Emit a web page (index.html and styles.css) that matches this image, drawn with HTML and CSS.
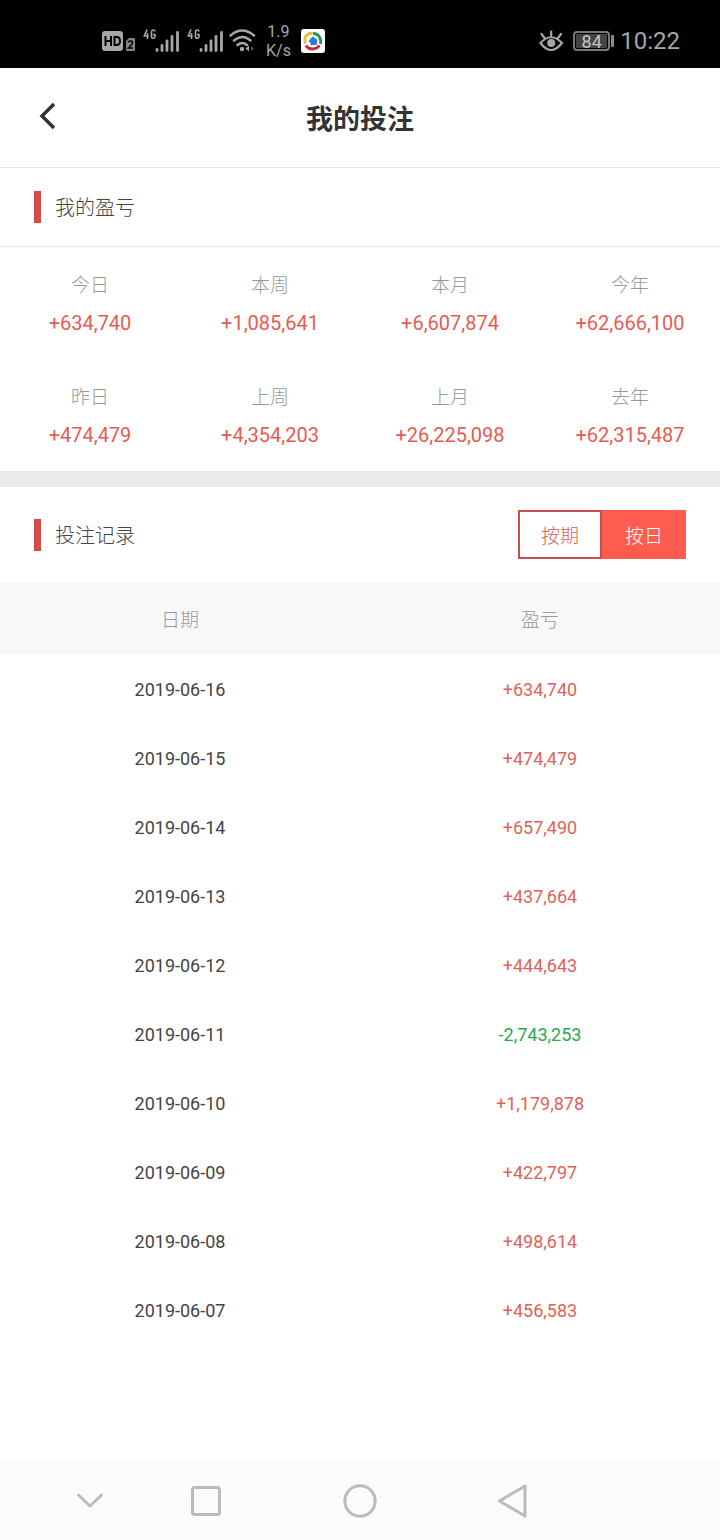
FILE: index.html
```
<!DOCTYPE html>
<html lang="zh-CN">
<head>
<meta charset="utf-8">
<meta name="viewport" content="width=device-width, initial-scale=1">
<title>我的投注</title>
<link rel="stylesheet" href="styles.css">
</head>
<body>
<div class="screen">
  <div class="status">
    <div class="status-group">
      <svg class="icon" width="34" height="22" viewBox="0 0 34 22" aria-hidden="true">
        <rect x="0" y="1" width="21" height="20" rx="3" fill="#a6a6a6"/>
        <path d="M3.500 6v10M9 6v10M3.500 11H9M12.500 7v8h2q3.500 0 3.500-4t-3.500-4z" fill="none" stroke="#000" stroke-width="2"/>
        <path d="M27 8h5q1 0 1 1v11q0 1-1 1h-7q-1 0-1-1v-9z" fill="#858585"/>
        <path d="M26.500 12.500q0-1.500 2-1.500t2 1.500q0 1.500-4 5.500h4.500" fill="none" stroke="#000" stroke-width="1.600"/>
      </svg>
      <svg class="icon" width="37" height="26" viewBox="0 0 37 26" aria-hidden="true">
        <g id="signal-shape" fill="none" stroke="#a6a6a6">
          <path d="M4 1.500L1.300 8h4.400M4.500 5v6M12 3.500Q12 2 10.300 2T8.500 4v4.500q0 1.800 1.700 1.800T12 8.500V6.500H10" stroke-width="1.600"/>
          <path d="M14 21.500v1M19 17.500v5M24 13v9.500M29 8.500v14M34.500 4.500v18" stroke-width="2.800" stroke-linecap="round"/>
        </g>
      </svg>
      <svg class="icon" width="37" height="26" viewBox="0 0 37 26" aria-hidden="true"><use href="#signal-shape"/></svg>
      <svg class="icon wifi" width="28" height="24" viewBox="0 0 28 24" aria-hidden="true">
        <g fill="none" stroke="#a6a6a6" stroke-width="2.500" stroke-linecap="round">
          <path d="M1.500 6.500Q13 -3.500 25 6.500M5 11.500q8.500-7 16.500 0M8.500 16q5-4 9.500 0"/>
        </g>
        <circle cx="13" cy="20" r="2.200" fill="#a6a6a6"/>
        <path d="M20 16.500v6l-3.500-3z" fill="#a6a6a6"/>
        <path d="M22 17v5l3-2.500z" fill="#555"/>
      </svg>
      <div class="speed"><span>1.9</span><span>K/s</span></div>
      <svg class="icon" width="24" height="24" viewBox="0 0 24 24" aria-hidden="true">
        <rect width="24" height="24" rx="3" fill="#fff"/>
        <path d="M4.500 14.500Q2.500 8.500 6.500 5.500q2.500-1.500 5-1" fill="none" stroke="#e8c33c" stroke-width="3"/>
        <path d="M12 4.500q4.500 0 6.500 3.500t1 7" fill="none" stroke="#28935b" stroke-width="3"/>
        <path d="M18.500 16.500q-2.500 3.500-7 3.500t-6.500-3.500" fill="none" stroke="#cf2737" stroke-width="3"/>
        <path d="M12 7.500l4.500 3.500-1 5h-6v-2.500l-2-.500 1.500-3z" fill="#287fc4"/>
      </svg>
    </div>
    <div class="status-group status-right">
      <svg class="icon eye" width="25" height="22" viewBox="0 0 25 22" aria-hidden="true">
        <g fill="none" stroke="#a6a6a6" stroke-width="2.200" stroke-linecap="round">
          <path d="M1.500 13Q12 1.500 23 13 12 27 1.500 13zM12.200 6V1.500M5.500 8L2.500 4M19 8l3-4"/>
        </g>
        <circle cx="12.200" cy="13" r="4" fill="#a6a6a6"/>
      </svg>
      <div class="battery">84</div>
      <span class="battery-tip"></span>
      <time class="clock">10:22</time>
    </div>
  </div>

  <header class="title-bar">
    <button class="back" type="button" aria-label="返回">
      <svg class="icon" width="20" height="28" viewBox="0 0 20 28" aria-hidden="true"><path d="M16 2L4 14l12 12" fill="none" stroke="#333" stroke-width="3.500"/></svg>
    </button>
    <h1 class="title">我的投注</h1>
  </header>

  <main class="content">
    <section>
      <div class="section-head ruled"><h2 class="section-title">我的盈亏</h2></div>
      <dl class="stats">
        <div class="stat"><dt>今日</dt><dd>+634,740</dd></div>
        <div class="stat"><dt>本周</dt><dd>+1,085,641</dd></div>
        <div class="stat"><dt>本月</dt><dd>+6,607,874</dd></div>
        <div class="stat"><dt>今年</dt><dd>+62,666,100</dd></div>
        <div class="stat"><dt>昨日</dt><dd>+474,479</dd></div>
        <div class="stat"><dt>上周</dt><dd>+4,354,203</dd></div>
        <div class="stat"><dt>上月</dt><dd>+26,225,098</dd></div>
        <div class="stat"><dt>去年</dt><dd>+62,315,487</dd></div>
      </dl>
    </section>
    <section class="records">
      <div class="section-head tall">
        <h2 class="section-title">投注记录</h2>
        <div class="switch">
          <button class="option" type="button" aria-pressed="false">按期</button>
          <button class="option active" type="button" aria-pressed="true">按日</button>
        </div>
      </div>
      <table class="table">
        <thead><tr><th scope="col">日期</th><th scope="col">盈亏</th></tr></thead>
        <tbody>
          <tr><td>2019-06-16</td><td class="gain">+634,740</td></tr>
          <tr><td>2019-06-15</td><td class="gain">+474,479</td></tr>
          <tr><td>2019-06-14</td><td class="gain">+657,490</td></tr>
          <tr><td>2019-06-13</td><td class="gain">+437,664</td></tr>
          <tr><td>2019-06-12</td><td class="gain">+444,643</td></tr>
          <tr><td>2019-06-11</td><td class="loss">-2,743,253</td></tr>
          <tr><td>2019-06-10</td><td class="gain">+1,179,878</td></tr>
          <tr><td>2019-06-09</td><td class="gain">+422,797</td></tr>
          <tr><td>2019-06-08</td><td class="gain">+498,614</td></tr>
          <tr><td>2019-06-07</td><td class="gain">+456,583</td></tr>
        </tbody>
      </table>
    </section>
  </main>

  <nav class="nav" aria-label="系统导航">
    <button class="nav-button" type="button" aria-label="收起"><svg class="icon" width="36" height="36" viewBox="0 0 36 36"><path d="M6.500 12L18 23l11.500-11"/></svg></button>
    <button class="nav-button" type="button" aria-label="最近任务"><svg class="icon" width="36" height="36" viewBox="0 0 36 36"><rect x="4.500" y="4.500" width="27" height="27" rx="2"/></svg></button>
    <button class="nav-button" type="button" aria-label="主页"><svg class="icon" width="36" height="36" viewBox="0 0 36 36"><circle cx="18" cy="18" r="15.200"/></svg></button>
    <button class="nav-button" type="button" aria-label="后退"><svg class="icon" width="36" height="36" viewBox="0 0 36 36"><path d="M30 3v30L4.500 18z"/></svg></button>
  </nav>
</div>
</body>
</html>
```
FILE: styles.css
```
* { box-sizing: border-box; }

body {
  margin: 0;
  background: #fff;
  color: #444;
  font-family: Roboto, "Noto Sans CJK SC", sans-serif;
}

button {
  margin: 0;
  padding: 0;
  border: 0;
  background: none;
  font: inherit;
}

.icon { display: block; flex: none; }

.screen {
  display: flex;
  flex-direction: column;
  min-height: 100vh;
}

.status {
  display: flex;
  justify-content: space-between;
  height: 68px;
  padding: 14px 40px 0 102px;
  background: #000;
  color: #a6a6a6;
}

.status-group {
  display: flex;
  align-items: center;
  gap: 7px;
}

.wifi { margin-left: -2px; margin-right: 2px; }

.status-right { gap: 6px; }

.eye { margin-right: 3px; }

.speed {
  display: flex;
  flex-direction: column;
  align-items: center;
  margin-right: 3px;
  font-size: 16px;
  line-height: 19px;
}

.battery {
  width: 37px;
  height: 20px;
  border: 2px solid #777;
  border-radius: 4px;
  background: #444;
  box-shadow: inset 0 0 0 1px #000;
  color: #c4c4c4;
  font-size: 18px;
  line-height: 17px;
  text-align: center;
}

.battery-tip {
  width: 3px;
  height: 12px;
  margin-left: -5px;
  border-radius: 1px;
  background: #8a8a8a;
}

.clock { font-size: 24px; }

.title-bar {
  display: grid;
  grid-template-columns: 96px 1fr 96px;
  align-items: center;
  height: 100px;
  border-bottom: 1px solid #e8e8e8;
}

.back {
  display: flex;
  justify-content: center;
  padding-bottom: 4px;
}

.title {
  margin: 0;
  color: #333;
  font-size: 27px;
  font-weight: 700;
  text-align: center;
}

.content { flex: 1; }

.section-head {
  display: flex;
  align-items: center;
  justify-content: space-between;
  height: 79px;
  padding: 0 34px;
}

.ruled { border-bottom: 1px solid #e8e8e8; }
.tall { height: 95px; }

.section-title {
  margin: 0;
  padding: 2px 0 0 14px;
  border-left: 7px solid #d54c4a;
  font-size: 20px;
  font-weight: 300;
  line-height: 30px;
}

.stats {
  display: grid;
  grid-template-columns: repeat(4, 1fr);
  margin: 0;
}

.stat {
  height: 112px;
  padding-top: 24px;
  text-align: center;
}

.stat dt {
  color: #999;
  font-size: 19px;
  font-weight: 300;
  line-height: 30px;
}

.stat dd {
  margin: 6px 0 0;
  color: #e75b52;
  font-size: 20px;
  line-height: 32px;
}

.records { border-top: 16px solid #eaeaea; }

.switch { display: flex; }

.option {
  width: 84px;
  height: 49px;
  border: 2px solid #c9504e;
  color: #d9605a;
  font-size: 19px;
  font-weight: 300;
}

.active {
  border-color: #ff5c50;
  background: #ff5c50;
  color: #fff;
}

.table {
  width: 100%;
  border-collapse: collapse;
  table-layout: fixed;
  font-size: 18px;
  text-align: center;
}

.table th {
  height: 73px;
  padding: 0;
  background: #f8f8f8;
  color: #999;
  font-size: 19px;
  font-weight: 300;
}

.table td {
  height: 69px;
  padding: 0;
}

.table .gain { color: #e06259; }
.table .loss { color: #25ab50; }

.nav {
  display: grid;
  grid-template-columns: 116fr 116fr 192fr 112fr;
  height: 78px;
  padding: 0 21% 0 32px;
  background: #fbfbfb;
}

.nav-button {
  display: flex;
  align-items: center;
  justify-content: center;
}

.nav-button svg {
  fill: none;
  stroke: #bbb;
  stroke-width: 3;
  stroke-linecap: round;
  stroke-linejoin: round;
}
```
